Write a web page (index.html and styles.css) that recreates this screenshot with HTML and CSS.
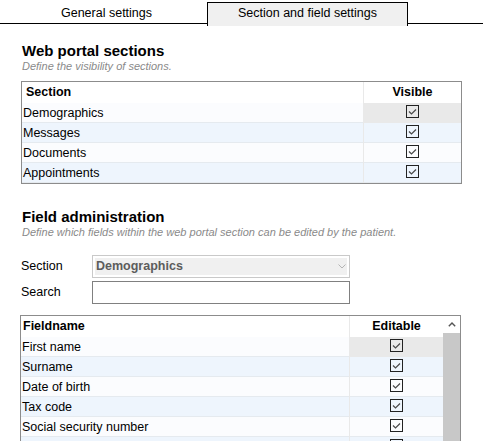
FILE: index.html
```html
<!DOCTYPE html>
<html lang="en">
<head>
    <meta charset="UTF-8">
    <meta name="viewport" content="width=device-width">
    <title>Portal settings</title>
    <link rel="stylesheet" href="styles.css">
</head>
<body>
<div class="tabs">
    <div class="tab">General settings</div>
    <div class="tab active">Section and field settings</div>
</div>
<div class="page">
    <h2>Web portal sections</h2>
    <p class="hint">Define the visibility of sections.</p>
    <div class="grid sections">
        <div class="row head"><div class="name">Section</div><div class="flag">Visible</div></div>
        <div class="row"><div class="name">Demographics</div><div class="flag sel"><svg class="chk" viewBox="0 0 13 13"><rect x=".5" y=".5" width="12" height="12"/><path d="M3 6.5l2.5 2.5L10 4.5"/></svg></div></div>
        <div class="row"><div class="name">Messages</div><div class="flag"><svg class="chk" viewBox="0 0 13 13"><rect x=".5" y=".5" width="12" height="12"/><path d="M3 6.5l2.5 2.5L10 4.5"/></svg></div></div>
        <div class="row"><div class="name">Documents</div><div class="flag"><svg class="chk" viewBox="0 0 13 13"><rect x=".5" y=".5" width="12" height="12"/><path d="M3 6.5l2.5 2.5L10 4.5"/></svg></div></div>
        <div class="row"><div class="name">Appointments</div><div class="flag"><svg class="chk" viewBox="0 0 13 13"><rect x=".5" y=".5" width="12" height="12"/><path d="M3 6.5l2.5 2.5L10 4.5"/></svg></div></div>
    </div>

    <h2 class="next">Field administration</h2>
    <p class="hint">Define which fields within the web portal section can be edited by the patient.</p>
    <div class="form">
        <div class="field">
            <label>Section</label>
            <div class="select">
                <span>Demographics</span>
                <svg width="8" height="5" viewBox="0 0 8 5"><path d="M.5 .5L4 4 7.5 .5" fill="none" stroke="#b4b4b4"/></svg>
            </div>
        </div>
        <div class="field">
            <label>Search</label>
            <div class="search"></div>
        </div>
    </div>

    <div class="grid fields">
        <div class="list">
            <div class="row head"><div class="name">Fieldname</div><div class="flag">Editable</div></div>
            <div class="row"><div class="name">First name</div><div class="flag sel"><svg class="chk" viewBox="0 0 13 13"><rect x=".5" y=".5" width="12" height="12"/><path d="M3 6.5l2.5 2.5L10 4.5"/></svg></div></div>
            <div class="row"><div class="name">Surname</div><div class="flag"><svg class="chk" viewBox="0 0 13 13"><rect x=".5" y=".5" width="12" height="12"/><path d="M3 6.5l2.5 2.5L10 4.5"/></svg></div></div>
            <div class="row"><div class="name">Date of birth</div><div class="flag"><svg class="chk" viewBox="0 0 13 13"><rect x=".5" y=".5" width="12" height="12"/><path d="M3 6.5l2.5 2.5L10 4.5"/></svg></div></div>
            <div class="row"><div class="name">Tax code</div><div class="flag"><svg class="chk" viewBox="0 0 13 13"><rect x=".5" y=".5" width="12" height="12"/><path d="M3 6.5l2.5 2.5L10 4.5"/></svg></div></div>
            <div class="row"><div class="name">Social security number</div><div class="flag"><svg class="chk" viewBox="0 0 13 13"><rect x=".5" y=".5" width="12" height="12"/><path d="M3 6.5l2.5 2.5L10 4.5"/></svg></div></div>
            <div class="row"><div class="name"></div><div class="flag"><svg class="chk" viewBox="0 0 13 13"><rect x=".5" y=".5" width="12" height="12"/><path d="M3 6.5l2.5 2.5L10 4.5"/></svg></div></div>
        </div>
        <div class="scroll">
            <div class="up"><svg width="8" height="5" viewBox="0 0 8 5"><path d="M.8 4.2L4 1 7.2 4.2" fill="none" stroke="#555" stroke-width="1.4"/></svg></div>
        </div>
    </div>
</div>
</body>
</html>
```

FILE: styles.css
```css
*{
    margin: 0;
    padding: 0;
}
html,body{
    width: 100%;
    height: 100%;
    overflow: hidden;
}
body{
    font-family: "Liberation Sans", Arial, sans-serif;
    font-size: 12.5px;
    color: #000;
    background: #fff;
}

/* tab strip */
.tabs{
    display: flex;
    align-items: flex-start;
    height: 21px;
    padding: 2px 0 0 6px;
    border-bottom: 1px solid #000;
}
.tab{
    width: 201px;
    box-sizing: border-box;
    border: 1px solid transparent;
    border-bottom: 0;
    line-height: 21px;
    text-align: center;
}
.tab.active{
    height: 24px;
    background: #f0f0f0;
    border-color: #000;
}

.page{
    padding-left: 21px;
}
h2{
    font-size: 15px;
    line-height: 18px;
    font-weight: bold;
    margin: 18px 0 0 1px;
}
h2.next{
    margin-top: 24px;
}
.hint{
    font-size: 11px;
    line-height: 13px;
    font-style: italic;
    color: #8a8a8a;
    margin: 0 0 0 1px;
}

/* grids */
.grid{
    width: 441px;
    box-sizing: border-box;
    border: 1px solid #8c8c8c;
    margin-top: 8px;
}
.row{
    display: grid;
    grid-template-columns: 1fr 98px;
    height: 20px;
    box-sizing: border-box;
    border-bottom: 1px solid #e5eaef;
    background: #fbfcfe;
    line-height: 20px;
}
.row:nth-child(odd){
    background: #eef5fd;
}
.row.head{
    height: 21px;
    border-bottom: 0;
    background: #fff;
    font-weight: bold;
    line-height: 21px;
}
.name{
    padding-left: 1px;
    white-space: nowrap;
}
.sections .head .name{
    padding-left: 4px;
}
.fields .head .name{
    padding-left: 2px;
}
.flag{
    border-left: 1px solid #e9e9e9;
    display: flex;
    justify-content: center;
    align-items: flex-start;
    padding-top: 2px;
}
.head .flag{
    padding-top: 0;
}
.flag.sel{
    background: #e9e9e9;
}
.chk{
    display: block;
    width: 13px;
    height: 13px;
}
.chk rect{
    fill: none;
    stroke: #222;
}
.chk path{
    fill: none;
    stroke: #4a4a4a;
    stroke-width: 1.2;
}

/* filter form */
.form{
    margin-top: 16px;
}
.field{
    display: flex;
    align-items: center;
}
.field + .field{
    margin-top: 3px;
}
.field label{
    width: 71px;
    line-height: 23px;
}
.select{
    width: 258px;
    height: 23px;
    box-sizing: border-box;
    border: 1px solid #c9c9c9;
    background: #f0f0f0;
    box-shadow: inset 0 0 0 2px #fff;
    display: flex;
    align-items: center;
    justify-content: space-between;
    padding: 0 3px;
    font-weight: bold;
    color: #5c5c5c;
    line-height: 21px;
}
.search{
    width: 258px;
    height: 23px;
    box-sizing: border-box;
    border: 1px solid #808080;
    background: #fff;
}

.fields{
    display: flex;
    margin: 11px 0 0 -1px;
}
.fields .list{
    flex: 1;
}
.fields .row{
    grid-template-columns: 1fr 94px;
}
.scroll{
    width: 17px;
    background: #c8c8c8;
}
.scroll .up{
    height: 17px;
    background: #fff;
    display: flex;
    justify-content: center;
    align-items: center;
}
```
